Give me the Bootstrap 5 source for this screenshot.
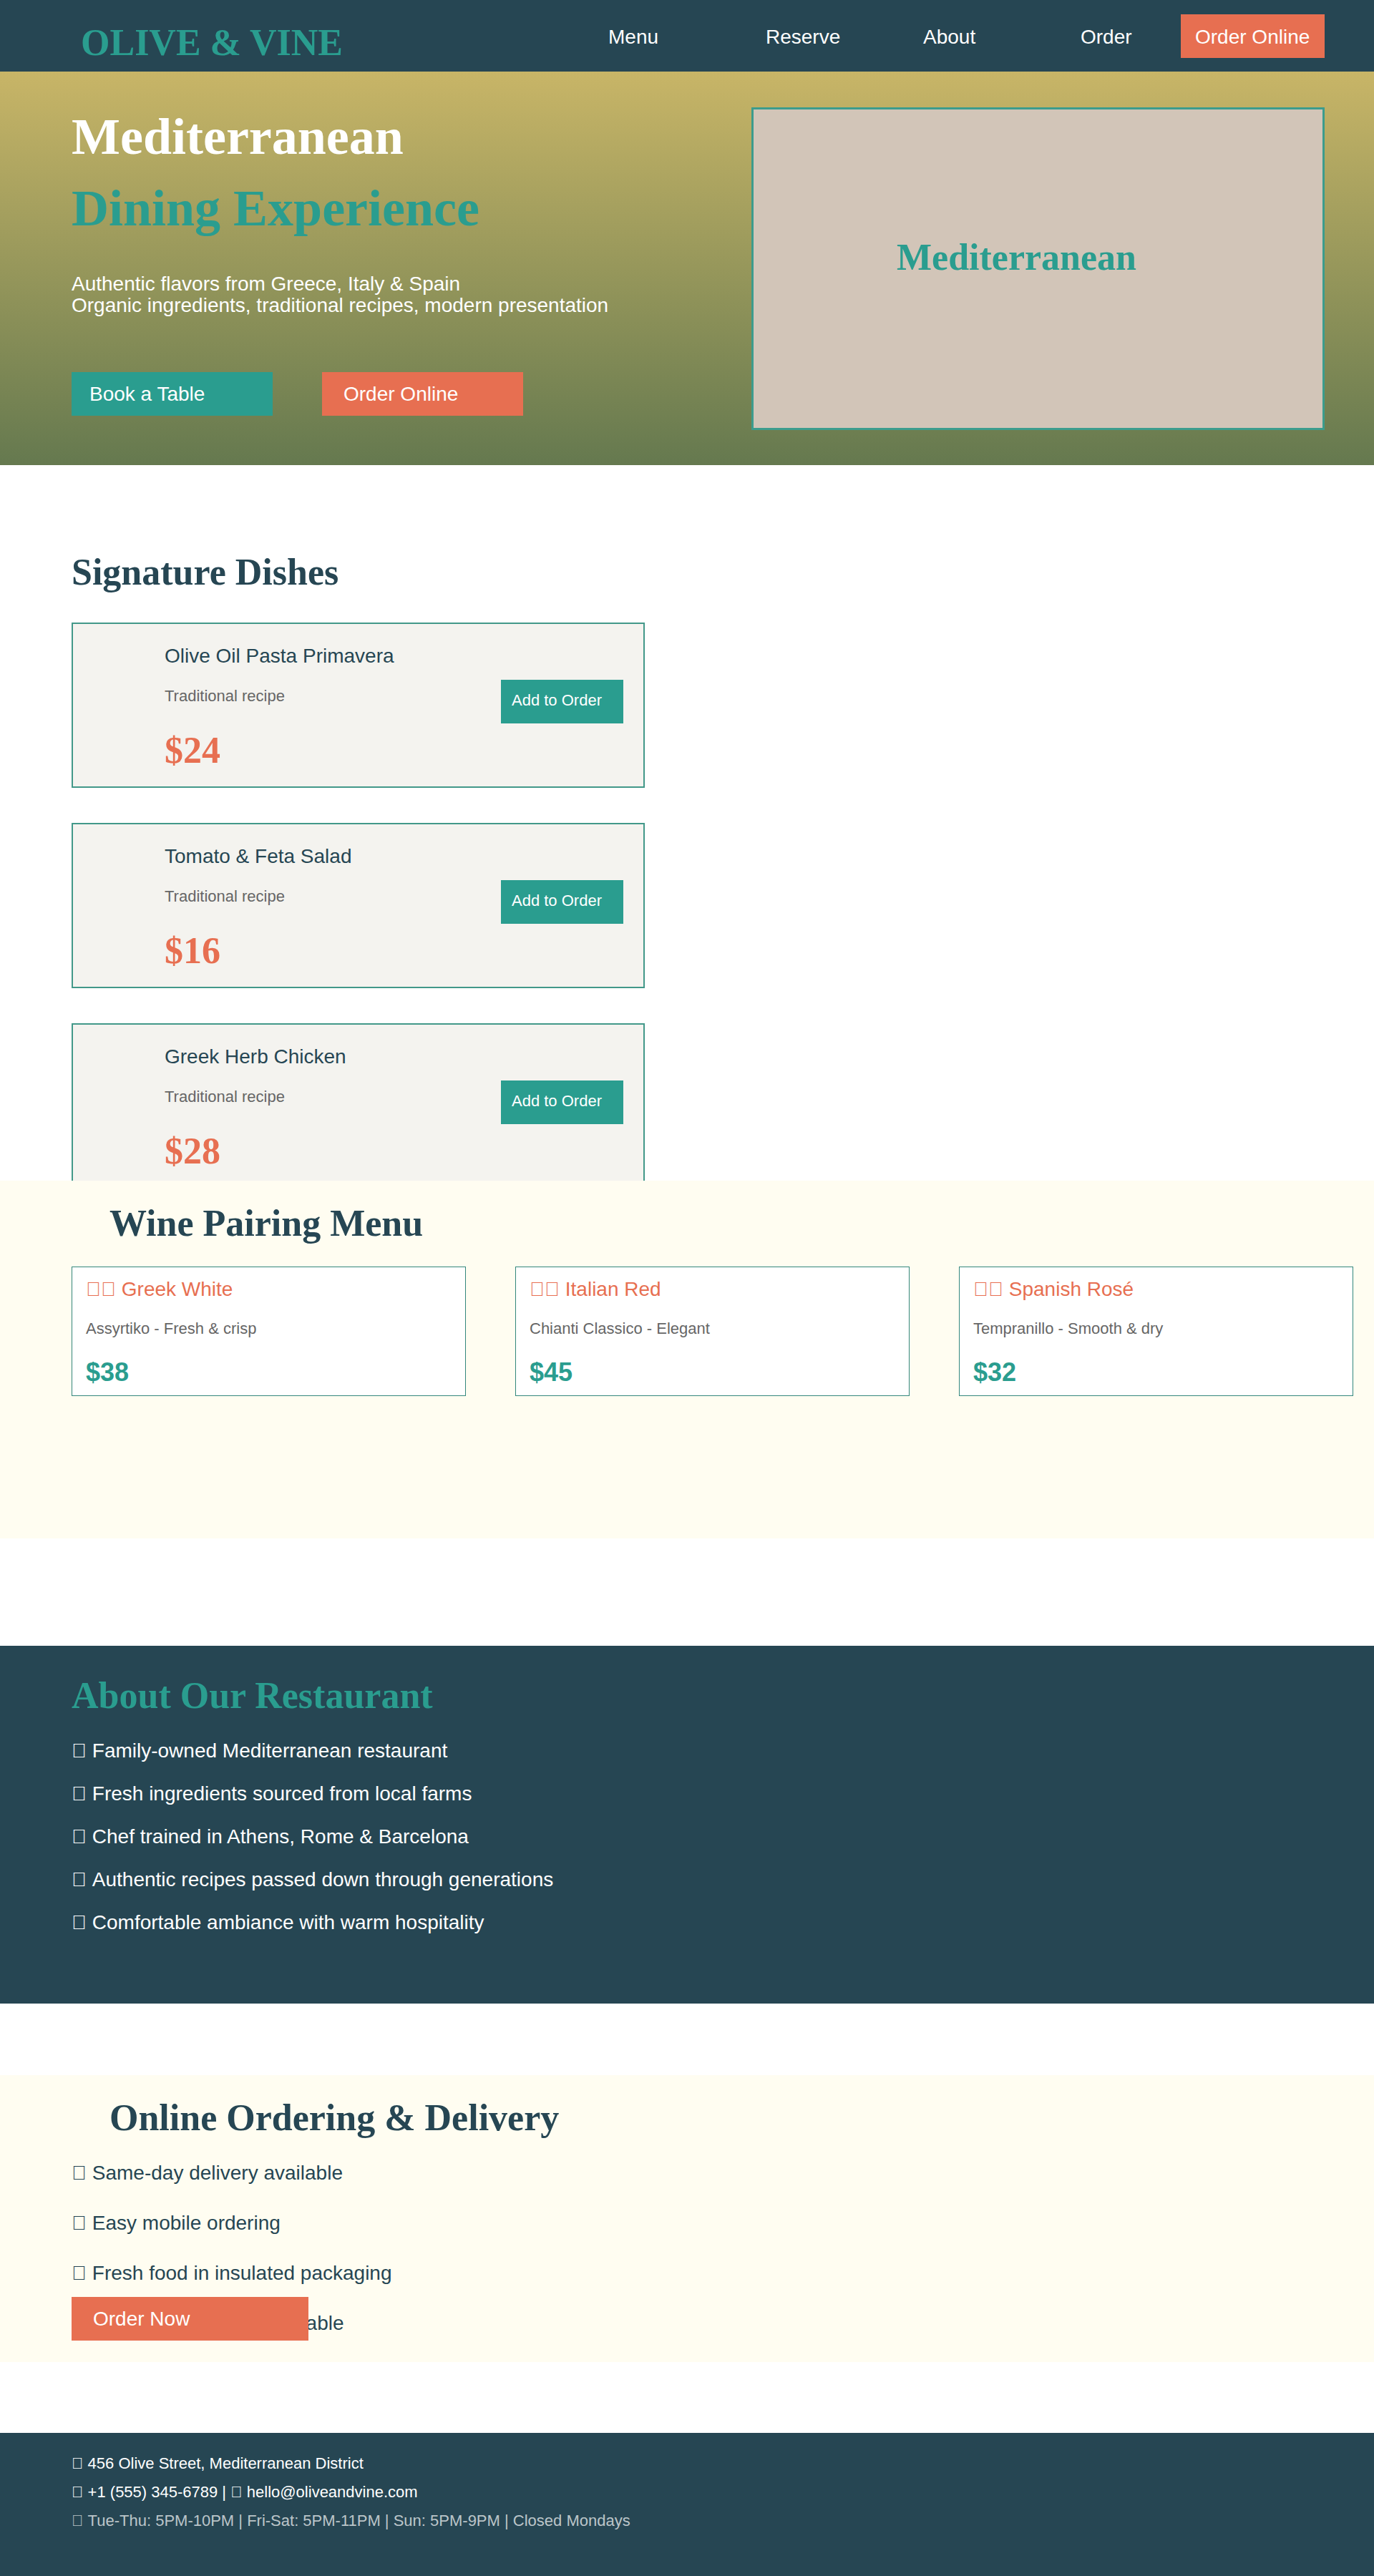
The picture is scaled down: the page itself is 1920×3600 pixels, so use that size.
<!doctype html>
<html lang="en">
<head>
  <meta charset="utf-8">
  <title>Olive &amp; Vine</title>
  <meta name="viewport" content="width=device-width, initial-scale=1">
  <link href="https://cdn.jsdelivr.net/npm/bootstrap@5.3.3/dist/css/bootstrap.min.css" rel="stylesheet">
  <style>
    body { font-family: "Liberation Sans", Arial, sans-serif; font-size: 28px; color: #264653; background: #fff; }
    .serif-head { font-family: "Liberation Serif", "Times New Roman", serif; font-weight: 700; font-size: 52px; line-height: 60px; margin: 0; }
    .text-teal { color: #2a9d8f; }
    .text-navy { color: #264653; }

    .site-nav { height: 100px; background: #264653; }
    .site-logo { width: 850px; padding: 30px 0 0 113px; color: #2a9d8f; }
    .site-nav a.menu-item { width: 220px; padding: 0; color: #fff; font-size: 28px; line-height: 32px; margin-top: 36px; }
    .site-nav a.menu-item.last-item { width: 140px; }
    .btn-flat { border: 0; border-radius: 0; color: #fff; text-align: left; line-height: 32px; }
    .btn-flat:hover { color: #fff; }
    .btn-coral, .btn-coral:hover { background: #e76f51; }
    .btn-teal, .btn-teal:hover { background: #2a9d8f; }
    .nav-cta { width: 201px; height: 61px; font-size: 28px; padding: 16px 0 0 20px; margin-top: 20px; }

    .hero-band { height: 550px; background: linear-gradient(180deg, #c8b567 0%, #65794f 100%); padding: 50px 69px 0 100px; }
    .hero-copy { margin-top: -9px; }
    .hero-title { font-size: 72px; line-height: 100px; }
    .hero-text { font-size: 28px; line-height: 30px; color: #fff; margin: 41px 0 0; }
    .hero-actions { gap: 69px; margin-top: 78px; }
    .hero-btn { width: 281px; height: 61px; font-size: 28px; padding: 15px 0 0 25px; }
    .hero-btn + .hero-btn { padding-left: 30px; }
    .hero-photo { width: 801px; height: 451px; background: #d2c5b8; border: 3px solid #3c9c8d; padding: 177px 0 0 200px; }

    .dishes-band { height: 1000px; overflow: hidden; padding: 120px 100px 0; }
    .dish-card { width: 801px; height: 231px; background: #f4f3ef; border: 2px solid #429889; border-radius: 0; padding: 0 28px 0 128px; margin-bottom: 49px; }
    .dish-name { font-size: 28px; line-height: 32px; margin: 0; padding-top: 29px; }
    .dish-desc { font-size: 22px; line-height: 26px; color: #666; margin: 0; padding-top: 27px; }
    .dish-price { font-size: 52px; line-height: 60px; color: #e76f51; padding-top: 33px; }
    .dish-btn { width: 171px; height: 61px; font-size: 22px; padding: 13px 0 0 15px; margin-top: 78px; }

    .cream-band { background: #fffdf1; }
    .wine-band { height: 500px; padding: 30px 0 0 100px; }
    .band-head { padding-left: 53px; }
    .wine-row { gap: 69px; margin-top: 30px; }
    .wine-card { width: 551px; height: 181px; border: 1px solid #33877c; border-radius: 0; background: #fff; padding: 0 19px; }
    .wine-name { font-size: 28px; line-height: 32px; color: #e76f51; margin: 0; padding-top: 15px; }
    .wine-desc { font-size: 22px; line-height: 26px; color: #666; margin: 0; padding-top: 26px; }
    .wine-price { font-size: 36px; line-height: 42px; font-weight: 700; color: #2a9d8f; padding-top: 27px; }

    .about-band { height: 500px; margin-top: 150px; background: #264653; padding: 40px 100px 0; color: #fff; }
    .about-list { margin: 17px 0 0; }
    .about-list li { line-height: 60px; }

    .order-band { height: 401px; margin-top: 100px; padding: 30px 100px 0; }
    .order-list { margin: 12px 0 0; }
    .order-list li { line-height: 70px; }
    .order-btn { position: absolute; left: 100px; top: 310px; width: 331px; height: 61px; font-size: 28px; padding: 15px 0 0 30px; }

    .site-footer { height: 200px; margin-top: 99px; background: #264653; color: #fff; padding: 23px 100px 0; font-size: 22px; line-height: 40px; }
    .footer-muted { color: rgba(255, 255, 255, .7); }
  </style>
</head>
<body>

<nav class="site-nav navbar p-0 align-items-start flex-nowrap justify-content-start">
  <div class="site-logo serif-head">OLIVE &amp; VINE</div>
  <div class="d-flex align-items-start">
    <a class="menu-item nav-link" href="#">Menu</a>
    <a class="menu-item nav-link" href="#">Reserve</a>
    <a class="menu-item nav-link" href="#">About</a>
    <a class="menu-item last-item nav-link" href="#">Order</a>
    <a class="btn btn-flat btn-coral nav-cta" href="#">Order Online</a>
  </div>
</nav>

<section class="hero-band d-flex justify-content-between">
  <div class="hero-copy">
    <h1 class="serif-head hero-title text-white">Mediterranean</h1>
    <h1 class="serif-head hero-title text-teal">Dining Experience</h1>
    <p class="hero-text">Authentic flavors from Greece, Italy &amp; Spain<br>Organic ingredients, traditional recipes, modern presentation</p>
    <div class="hero-actions d-flex">
      <a class="btn btn-flat btn-teal hero-btn" href="#">Book a Table</a>
      <a class="btn btn-flat btn-coral hero-btn" href="#">Order Online</a>
    </div>
  </div>
  <div class="hero-photo serif-head text-teal">Mediterranean</div>
</section>

<section class="dishes-band">
  <h2 class="serif-head text-navy mb-0" style="height:100px">Signature Dishes</h2>
  <div id="dishList"></div>
</section>

<section class="cream-band wine-band">
  <h2 class="serif-head text-navy band-head">Wine Pairing Menu</h2>
  <div class="wine-row d-flex" id="wineList"></div>
</section>

<section class="about-band">
  <h2 class="serif-head text-teal">About Our Restaurant</h2>
  <ul class="about-list list-unstyled">
    <li>&#xE000; Family-owned Mediterranean restaurant</li>
    <li>&#xE000; Fresh ingredients sourced from local farms</li>
    <li>&#xE000; Chef trained in Athens, Rome &amp; Barcelona</li>
    <li>&#xE000; Authentic recipes passed down through generations</li>
    <li>&#xE000; Comfortable ambiance with warm hospitality</li>
  </ul>
</section>

<section class="cream-band order-band position-relative">
  <h2 class="serif-head text-navy band-head">Online Ordering &amp; Delivery</h2>
  <ul class="order-list list-unstyled">
    <li>&#xE000; Same-day delivery available</li>
    <li>&#xE000; Easy mobile ordering</li>
    <li>&#xE000; Fresh food in insulated packaging</li>
    <li>&#xE000; Catering packages available</li>
  </ul>
  <a class="btn btn-flat btn-coral order-btn" href="#">Order Now</a>
</section>

<footer class="site-footer">
  <div>&#xE000; 456 Olive Street, Mediterranean District</div>
  <div>&#xE000; +1 (555) 345-6789 | &#xE000; hello@oliveandvine.com</div>
  <div class="footer-muted">&#xE000; Tue-Thu: 5PM-10PM | Fri-Sat: 5PM-11PM | Sun: 5PM-9PM | Closed Mondays</div>
</footer>

<script src="https://cdn.jsdelivr.net/npm/bootstrap@5.3.3/dist/js/bootstrap.bundle.min.js"></script>
<script>
const dishes = [
  { name: "Olive Oil Pasta Primavera", price: 24 },
  { name: "Tomato &amp; Feta Salad", price: 16 },
  { name: "Greek Herb Chicken", price: 28 }
];
const wines = [
  { name: "Greek White", desc: "Assyrtiko - Fresh &amp; crisp", price: 38 },
  { name: "Italian Red", desc: "Chianti Classico - Elegant", price: 45 },
  { name: "Spanish Rosé", desc: "Tempranillo - Smooth &amp; dry", price: 32 }
];

document.getElementById("dishList").innerHTML = dishes.map(d => `
  <div class="card dish-card flex-row justify-content-between">
    <div>
      <h3 class="dish-name">${d.name}</h3>
      <p class="dish-desc">Traditional recipe</p>
      <div class="dish-price serif-head">$${d.price}</div>
    </div>
    <a class="btn btn-flat btn-teal dish-btn" href="#">Add to Order</a>
  </div>
`).join("");

document.getElementById("wineList").innerHTML = wines.map(w => `
  <div class="card wine-card">
    <h3 class="wine-name">&#xE000;&#xE000; ${w.name}</h3>
    <p class="wine-desc">${w.desc}</p>
    <div class="wine-price">$${w.price}</div>
  </div>
`).join("");
</script>
</body>
</html>
